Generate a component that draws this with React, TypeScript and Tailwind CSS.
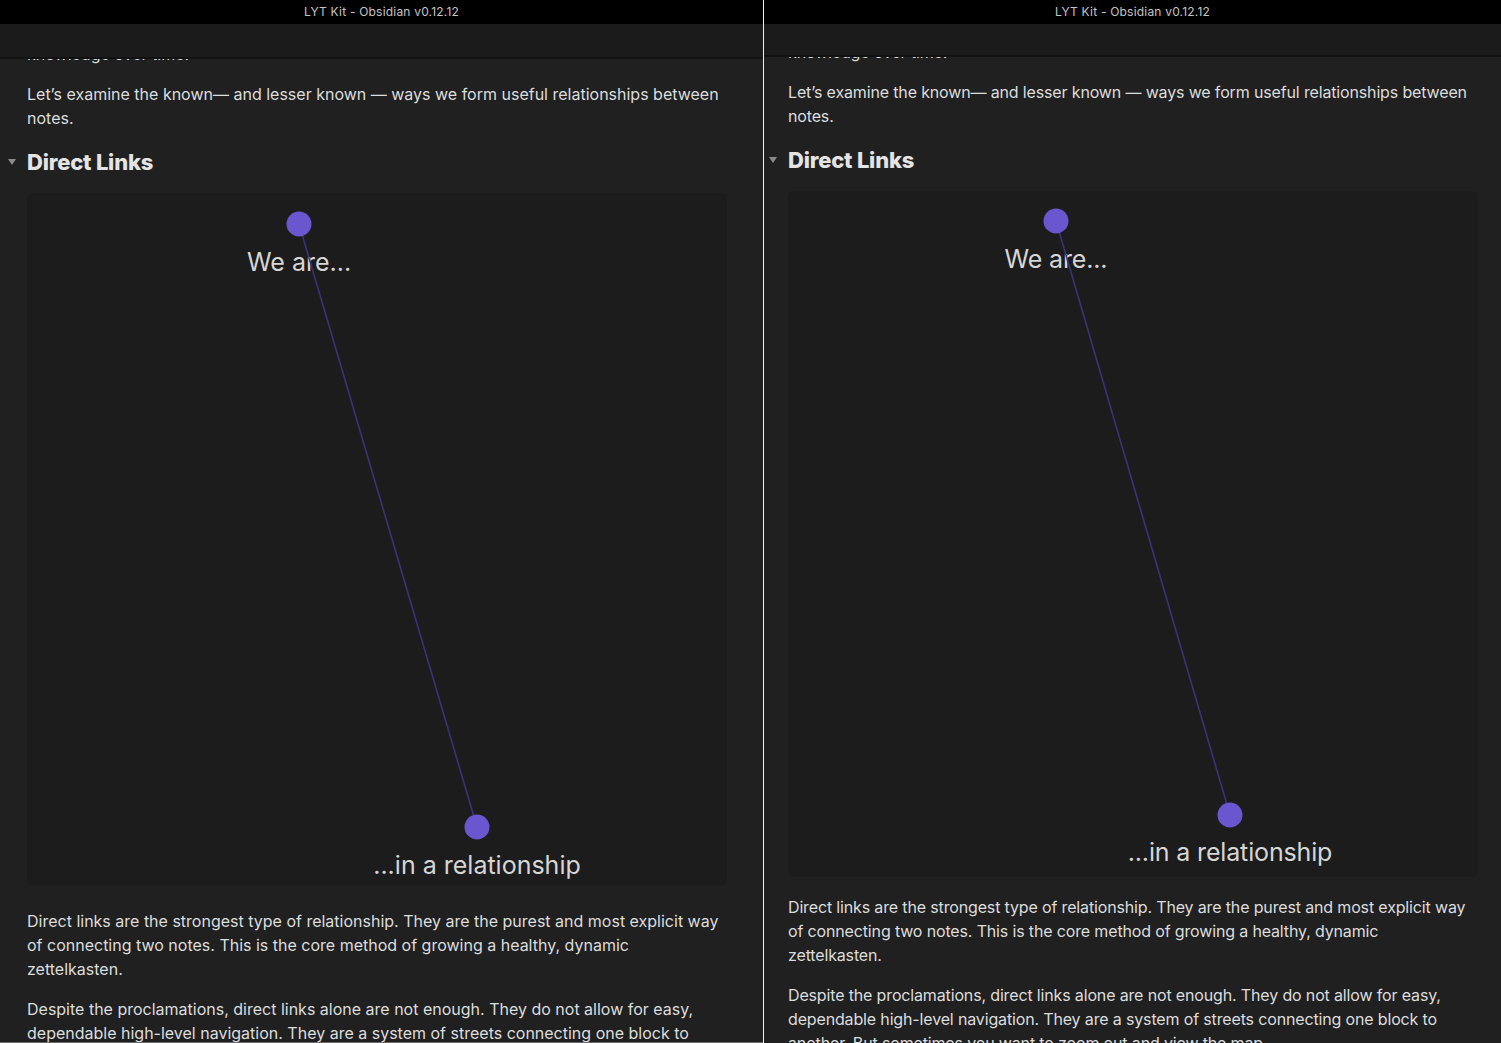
type Graph = {
  w: number;
  h: number;
  a: [number, number];
  b: [number, number];
  la: number;
  lb: number;
};

function LinkGraph({ g }: { g: Graph }) {
  return (
    <svg width={g.w} height={g.h} viewBox={`0 0 ${g.w} ${g.h}`} className="block font-['Inter','Noto_Sans',sans-serif]">
      <text x={g.a[0]} y={g.la} textAnchor="middle" fontSize="25" fill="#d6d6d6">
        We are...
      </text>
      <text x={g.b[0]} y={g.lb} textAnchor="middle" fontSize="25" fill="#d6d6d6">
        ...in a relationship
      </text>
      <line x1={g.a[0]} y1={g.a[1]} x2={g.b[0]} y2={g.b[1]} stroke="#3a3379" strokeWidth="1.6" />
      <circle cx={g.a[0]} cy={g.a[1]} r="12.5" fill="#6a56cf" />
      <circle cx={g.b[0]} cy={g.b[1]} r="12.5" fill="#6a56cf" />
    </svg>
  );
}

function Pane({
  graph,
  paneClass,
  toolbarClass,
  bodyClass,
  innerClass,
  textClass,
  boxClass,
  afterClass,
}: {
  graph: Graph;
  paneClass: string;
  toolbarClass: string;
  bodyClass: string;
  innerClass: string;
  textClass: string;
  boxClass: string;
  afterClass: string;
}) {
  return (
    <div className={`flex flex-col h-full overflow-hidden bg-[#202020] ${paneClass}`}>
      <div className="h-[24px] shrink-0 bg-black flex items-center justify-center text-[12px] leading-[16px] text-[#c4c4c4] tracking-[0.2px]">
        LYT Kit - Obsidian v0.12.12
      </div>
      <div className={`shrink-0 bg-[#1b1b1b] border-b-2 border-[#121212] ${toolbarClass}`} />
      <div className={`flex-1 overflow-hidden text-[16px] leading-[24px] text-[#dcddde] ${bodyClass}`}>
        <div className={innerClass}>
          <p>
            Over the long term, useful relationships between notes help us grow our
            <br />
            knowledge over time.
          </p>
          <p className={`mt-4 ${textClass}`}>
            Let’s examine the known— and lesser known — ways we form useful relationships between notes.
          </p>
          <div className="relative mt-4 mb-[15px]">
            <span className="absolute left-[-19px] top-[13px] w-0 h-0 border-l-[4px] border-r-[4px] border-t-[6px] border-l-transparent border-r-transparent border-t-[#8a8a8a]" />
            <h2 className="text-[22px] leading-[32px] font-extrabold text-[#e4e4e4] tracking-[-0.2px]">Direct Links</h2>
          </div>
          <div className={`rounded-md bg-[#1c1c1c] ${boxClass}`}>
            <LinkGraph g={graph} />
          </div>
          <p className={`${afterClass} ${textClass}`}>
            Direct links are the strongest type of relationship. They are the purest and most explicit way of
            connecting two notes. This is the core method of growing a healthy, dynamic zettelkasten.
          </p>
          <p className={`mt-4 ${textClass}`}>
            Despite the proclamations, direct links alone are not enough. They do not allow for easy, dependable
            high-level navigation. They are a system of streets connecting one block to another. But sometimes you
            want to zoom out and view the map.
          </p>
        </div>
      </div>
    </div>
  );
}

export default function App() {
  const left: Graph = { w: 700, h: 693, a: [272, 31], b: [450, 634], la: 78, lb: 681 };
  const right: Graph = { w: 690, h: 686, a: [268, 30], b: [442, 624], la: 77, lb: 670 };
  return (
    <div className="w-[1501px] h-[1043px] flex bg-black overflow-hidden font-['Inter','Noto_Sans',sans-serif]">
      <div className="h-full border-b border-[#6a6a6a]">
        <Pane
          graph={left}
          paneClass="w-[763px]"
          toolbarClass="h-[35px]"
          bodyClass="pl-[27px]"
          innerClass="w-[700px] mt-[-41px]"
          textClass="w-[700px]"
          boxClass="w-[700px] h-[693px]"
          afterClass="mt-[23px]"
        />
      </div>
      <div className="w-px h-full bg-[#f0f0f0]" />
      <Pane
        graph={right}
        paneClass="w-[737px]"
        toolbarClass="h-[33px]"
        bodyClass="pl-[24px] tracking-[-0.15px]"
        innerClass="w-[690px] mt-[-41px]"
        textClass="w-[682px]"
        boxClass="w-[690px] h-[686px]"
        afterClass="mt-[18px]"
      />
    </div>
  );
}
